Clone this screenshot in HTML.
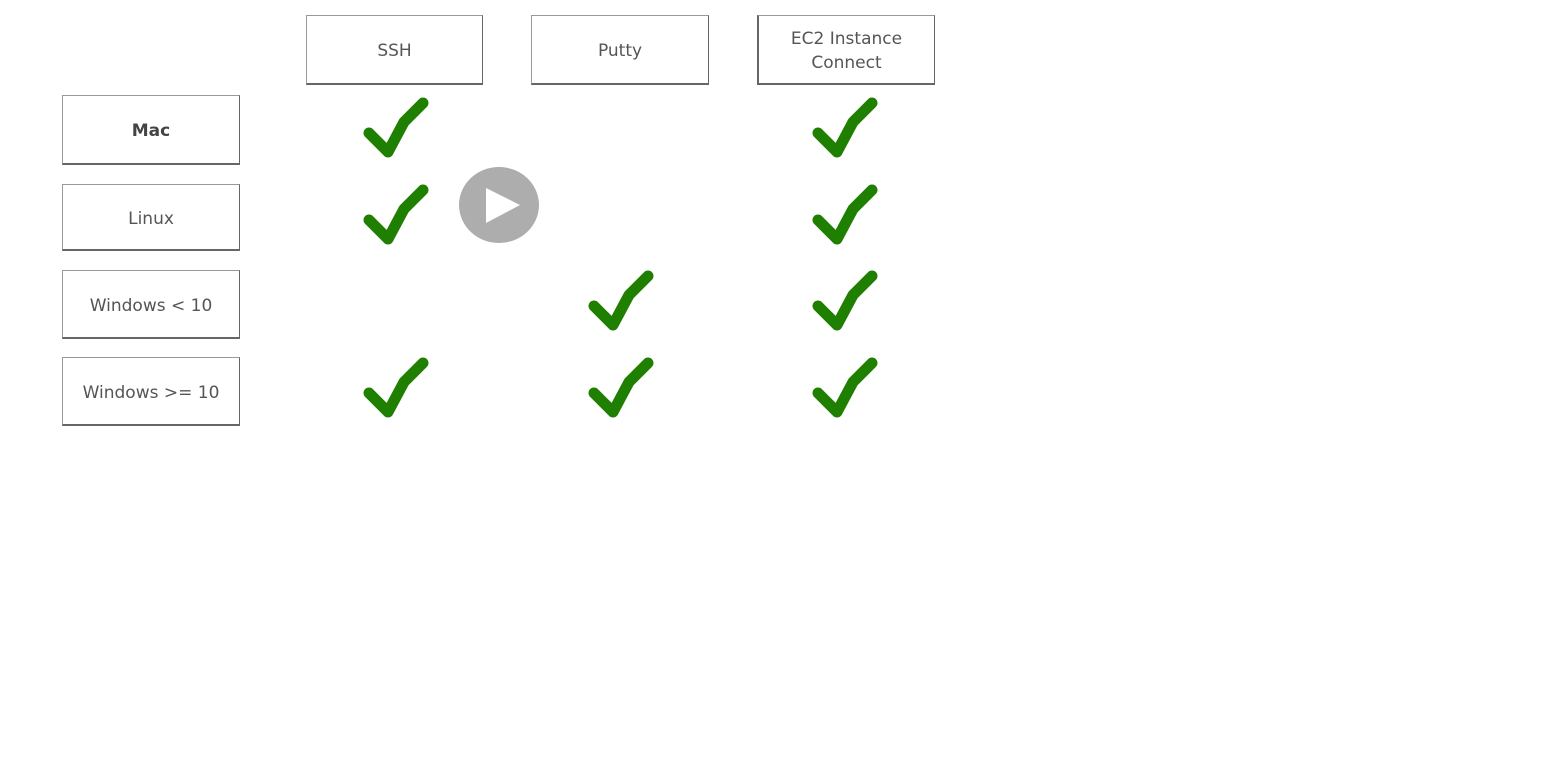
<!DOCTYPE html>
<html><head><style>
body{margin:0;width:1546px;height:782px;background:#fff;position:relative;overflow:hidden;font-family:"DejaVu Sans","Liberation Sans",sans-serif;color:#555}
.b{position:absolute;box-sizing:border-box;border:1px solid #999;border-bottom:2px solid #666;border-right:1px solid #666;display:flex;align-items:center;justify-content:center;text-align:center;font-size:17px;line-height:24px;padding-top:3px}
svg{position:absolute;left:0;top:0}
</style></head><body>
<div class="b" style="left:306px;top:15px;width:177px;height:70px">SSH</div>
<div class="b" style="left:531px;top:15px;width:178px;height:70px">Putty</div>
<div class="b" style="left:757px;top:15px;width:178px;height:70px;border-left:2px solid #666">EC2 Instance<br>Connect</div>
<div class="b" style="left:62px;top:95px;width:178px;height:70px;font-weight:bold;color:#444">Mac</div>
<div class="b" style="left:62px;top:184px;width:178px;height:67px">Linux</div>
<div class="b" style="left:62px;top:270px;width:178px;height:69px">Windows &lt; 10</div>
<div class="b" style="left:62px;top:357px;width:178px;height:69px">Windows &gt;= 10</div>
<svg width="1546" height="782">
<defs><path id="c" d="M3 33 L22 52 L38 22 L57 3" fill="none" stroke="#1e7f00" stroke-width="11" stroke-linejoin="round" stroke-linecap="round"/></defs>
<use href="#c" x="366" y="100"/><use href="#c" x="815" y="100"/>
<use href="#c" x="366" y="187"/><use href="#c" x="815" y="187"/>
<use href="#c" x="591" y="273"/><use href="#c" x="815" y="273"/>
<use href="#c" x="366" y="360"/><use href="#c" x="591" y="360"/><use href="#c" x="815" y="360"/>
<ellipse cx="499" cy="205" rx="40" ry="38" fill="#adadad"/>
<path d="M486 188 L486 223 L520 205 Z" fill="#fff"/>
</svg>
</body></html>
